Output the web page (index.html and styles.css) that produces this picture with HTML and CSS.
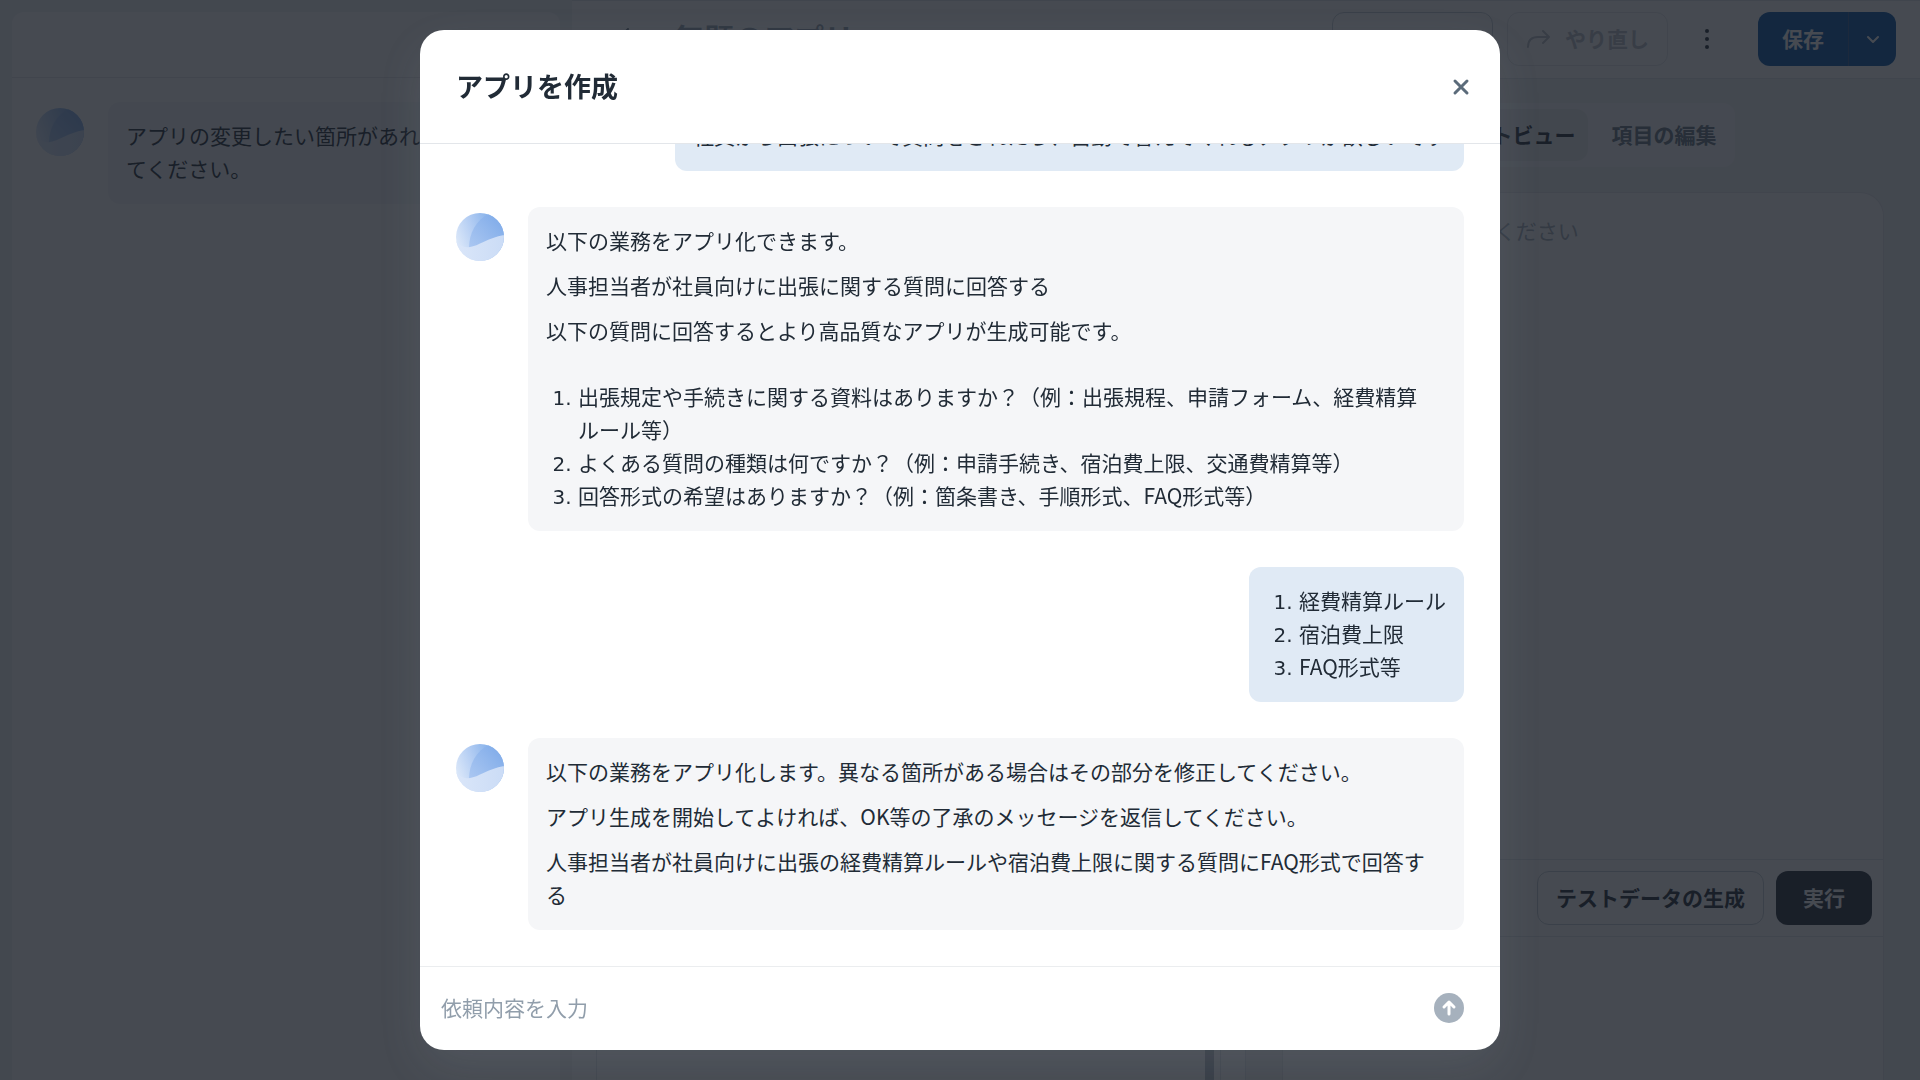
FILE: index.html
```html
<!DOCTYPE html>
<html lang="ja">
<head>
    <meta charset="UTF-8">
    <meta name="viewport" content="width=device-width, initial-scale=1.0">
    <title>アプリを作成</title>
    <link rel="stylesheet" href="styles.css">
</head>
<body>

    <!-- shared avatar artwork -->
    <svg class="defs" width="0" height="0" aria-hidden="true">
        <defs>
            <linearGradient id="av-sky" x1="0" y1="0.6" x2="0.8" y2="0.3">
                <stop offset="0" stop-color="#dce8f9"/>
                <stop offset="0.5" stop-color="#b3cdf3"/>
                <stop offset="1" stop-color="#86b1ea"/>
            </linearGradient>
            <linearGradient id="av-sail" x1="0.1" y1="1" x2="1" y2="0.2">
                <stop offset="0" stop-color="#a9c6f1"/>
                <stop offset="1" stop-color="#7fabe9"/>
            </linearGradient>
            <linearGradient id="av-sea" x1="0" y1="0" x2="1" y2="0">
                <stop offset="0" stop-color="#dae6f9"/>
                <stop offset="1" stop-color="#cbdcf6"/>
            </linearGradient>
            <clipPath id="av-clip"><circle cx="24" cy="24" r="24"/></clipPath>
            <symbol id="avatar" viewBox="0 0 48 48">
                <g clip-path="url(#av-clip)">
                    <rect width="48" height="48" fill="url(#av-sky)"/>
                    <path d="M13 35C13 20 20 7 34 0H48V26Z" fill="url(#av-sail)"/>
                    <path d="M0 28C4 33 8 35 14 34C22 33 32 25 48 22V48H0Z" fill="url(#av-sea)"/>
                </g>
            </symbol>
        </defs>
    </svg>

    <div class="app">
        <aside class="sidebar">
            <div class="sidebar-header"></div>
            <div class="message">
                <svg class="avatar" aria-hidden="true"><use href="#avatar"/></svg>
                <div class="bubble">
                    <p>アプリの変更したい箇所があれば指示してください。</p>
                </div>
            </div>
        </aside>

        <main class="workspace">
            <header class="topbar">
                <button class="icon-button back" aria-label="戻る">
                    <svg width="24" height="24" viewBox="0 0 24 24"><path d="M17 2L7 12L17 22"/></svg>
                </button>
                <h1>無題のアプリ</h1>
                <div class="actions">
                    <button class="outline">
                        <svg width="24" height="24" viewBox="0 0 24 24"><path d="M8 5L2 11L8 17M2 11H14C19 11 22 14 22 20"/></svg>
                        元に戻す
                    </button>
                    <button class="outline" disabled>
                        <svg width="24" height="24" viewBox="0 0 24 24"><path d="M17 5L23 11L17 17M23 11H12C6 11 2 14 2 21"/></svg>
                        やり直し
                    </button>
                </div>
                <button class="icon-button" aria-label="メニュー">
                    <svg width="24" height="24" viewBox="0 0 24 24" class="dots"><circle cx="12" cy="4" r="2"/><circle cx="12" cy="12" r="2"/><circle cx="12" cy="20" r="2"/></svg>
                </button>
                <div class="save-group">
                    <button class="save">保存</button>
                    <button class="save-more" aria-label="その他の保存方法">
                        <svg width="24" height="24" viewBox="0 0 24 24"><path d="M7 10L12 15L17 10"/></svg>
                    </button>
                </div>
            </header>

            <div class="columns">
                <section class="editor">
                    <div class="editor-panel"><div class="thumb"></div></div>
                </section>
                <section class="preview">
                    <div class="tabs">
                        <button class="tab active">テストビュー</button>
                        <button class="tab">項目の編集</button>
                    </div>
                    <div class="preview-panel">
                        <textarea class="preview-input" aria-label="質問内容" placeholder="質問内容を入力してください"></textarea>
                        <div class="preview-actions">
                            <button class="outline">テストデータの生成</button>
                            <button class="run">実行</button>
                        </div>
                        <div class="preview-result"></div>
                    </div>
                </section>
            </div>
        </main>
    </div>

    <div class="overlay">
        <div class="modal" role="dialog" aria-modal="true" aria-labelledby="modal-title">
            <header class="modal-header">
                <h2 id="modal-title">アプリを作成</h2>
                <button class="close" aria-label="閉じる">
                    <svg width="24" height="24" viewBox="0 0 24 24"><path d="M6 6L18 18M18 6L6 18"/></svg>
                </button>
            </header>

            <div class="messages">
                <div class="message user">
                    <div class="bubble">
                        <p>社員から出張について質問をされたら、自動で答えてくれるアプリが欲しいです</p>
                    </div>
                </div>

                <div class="message">
                    <svg class="avatar" aria-hidden="true"><use href="#avatar"/></svg>
                    <div class="bubble">
                        <p>以下の業務をアプリ化できます。</p>
                        <p>人事担当者が社員向けに出張に関する質問に回答する</p>
                        <p>以下の質問に回答するとより高品質なアプリが生成可能です。</p>
                        <ol>
                            <li>出張規定や手続きに関する資料はありますか？（例：出張規程、申請フォーム、経費精算ルール等）</li>
                            <li>よくある質問の種類は何ですか？（例：申請手続き、宿泊費上限、交通費精算等）</li>
                            <li>回答形式の希望はありますか？（例：箇条書き、手順形式、FAQ形式等）</li>
                        </ol>
                    </div>
                </div>

                <div class="message user">
                    <div class="bubble">
                        <ol>
                            <li>経費精算ルール</li>
                            <li>宿泊費上限</li>
                            <li>FAQ形式等</li>
                        </ol>
                    </div>
                </div>

                <div class="message">
                    <svg class="avatar" aria-hidden="true"><use href="#avatar"/></svg>
                    <div class="bubble">
                        <p>以下の業務をアプリ化します。異なる箇所がある場合はその部分を修正してください。</p>
                        <p>アプリ生成を開始してよければ、OK等の了承のメッセージを返信してください。</p>
                        <p>人事担当者が社員向けに出張の経費精算ルールや宿泊費上限に関する質問にFAQ形式で回答する</p>
                    </div>
                </div>
            </div>

            <form class="composer">
                <input type="text" aria-label="依頼内容" placeholder="依頼内容を入力">
                <button type="button" class="send" aria-label="送信">
                    <svg width="30" height="30" viewBox="0 0 30 30"><path d="M15 21V9M10 14L15 9L20 14"/></svg>
                </button>
            </form>
        </div>
    </div>

</body>
</html>
```

FILE: styles.css
```css
* {
    box-sizing: border-box;
}
body {
    margin: 0;
    background-color: #f1f2f5;
    color: #212b36;
    font-family: "Noto Sans CJK JP", sans-serif;
    font-size: 21px;
    line-height: 33px;
    line-break: strict;
    overflow: hidden;
}
h1, h2, p, ol {
    margin: 0;
}
button, input, textarea {
    font: inherit;
    color: inherit;
    border: none;
    background: none;
    padding: 0;
}
button {
    display: flex;
    align-items: center;
    justify-content: center;
    cursor: pointer;
    white-space: nowrap;
}
svg path {
    fill: none;
    stroke: currentColor;
    stroke-width: 2;
    stroke-linecap: round;
    stroke-linejoin: round;
}
.defs {
    position: absolute;
}
.defs path {
    stroke: none;
}
.defs path:nth-of-type(1) {
    fill: url(#av-sail);
}
.defs path:nth-of-type(2) {
    fill: url(#av-sea);
}

/* app behind the dialog */
.app {
    display: flex;
    gap: 12px;
    height: 100vh;
    padding-left: 12px;
}
.sidebar {
    flex: 0 0 548px;
    margin-top: 12px;
    background-color: #fff;
    border-radius: 12px 12px 0 0;
}
.sidebar-header {
    height: 66px;
    border-bottom: 1px solid #e3e6ea;
}
.sidebar .message {
    padding: 24px;
}
.sidebar .bubble {
    padding-right: 18px;
}
.workspace {
    flex: 1;
    display: flex;
    flex-direction: column;
    min-width: 0;
}
.topbar {
    display: flex;
    align-items: center;
    height: 79px;
    padding: 0 24px;
    background-color: #fff;
    border-bottom: 1px solid #dfe3e8;
    box-shadow: inset 0 1px #dfe3e8;
}
.topbar h1 {
    margin-left: 24px;
    padding-bottom: 4px;
    color: #919eab;
    font-size: 30px;
}
.back {
    color: #637381;
}
.actions {
    display: flex;
    gap: 14px;
    margin-left: auto;
}
.outline {
    gap: 15px;
    height: 54px;
    padding: 0 18px 2px;
    border: 1px solid #c4cdd5;
    border-radius: 12px;
    font-weight: 700;
}
.outline:disabled {
    border-color: #e3e6ea;
    color: #b8bec6;
}
.icon-button {
    width: 54px;
    height: 54px;
}
.actions + .icon-button {
    margin: 0 24px 0 12px;
}
.dots {
    fill: currentColor;
}
.save-group {
    display: flex;
    height: 54px;
    border-radius: 12px;
    background-color: #0052a4;
    color: #fff;
}
.save {
    padding: 0 24px 2px;
    font-weight: 700;
}
.save-more {
    width: 48px;
    border-left: 1px solid #2d5a94;
}
.columns {
    flex: 1;
    display: grid;
    grid-template-columns: 1fr 1fr;
    min-height: 0;
}
.editor {
    padding: 24px 24px 0;
    background-color: #fff;
    border-right: 1px solid #dfe3e8;
}
.editor-panel {
    display: flex;
    justify-content: flex-end;
    height: 100%;
    padding-right: 6px;
    border: 1px solid #dfe3e8;
    border-bottom: none;
}
.thumb {
    width: 9px;
    background-color: #b0bac4;
}
.preview {
    display: flex;
    flex-direction: column;
    align-items: center;
    gap: 25px;
    padding: 24px 36px 0;
}
.tabs {
    display: flex;
    gap: 12px;
    padding: 6px;
    border-radius: 12px;
    background-color: #fafbfc;
}
.tab {
    height: 52px;
    padding: 0 12px 2px;
    border-radius: 12px;
    color: #637381;
    font-weight: 700;
}
.tab.active {
    background-color: #eceef1;
    color: #212b36;
}
.preview-panel {
    flex: 1;
    align-self: stretch;
    display: flex;
    flex-direction: column;
    background-color: #fff;
    border: 1px solid #e3e6ea;
    border-bottom: none;
    border-radius: 24px 24px 0 0;
}
.preview-input {
    flex: 1;
    padding: 21px 24px;
    resize: none;
}
.preview-input::placeholder {
    color: #a5afba;
}
.preview-actions {
    display: flex;
    align-items: center;
    justify-content: flex-end;
    gap: 12px;
    height: 78px;
    padding: 0 11px;
    border-top: 1px solid #dfe3e8;
    border-bottom: 1px solid #dfe3e8;
}
.run {
    height: 54px;
    padding: 0 27px 2px;
    border-radius: 12px;
    background-color: #212b36;
    color: #fff;
    font-weight: 700;
}
.preview-result {
    height: 143px;
}

/* dialog */
.overlay {
    position: fixed;
    inset: 0;
    display: flex;
    justify-content: center;
    padding: 30px;
    background-color: rgba(24, 29, 38, 0.8);
}
.modal {
    display: flex;
    flex-direction: column;
    width: 100%;
    max-width: 1080px;
    background-color: #fff;
    border-radius: 24px;
    box-shadow: 0 18px 48px -6px rgba(145, 158, 171, 0.16);
    overflow: hidden;
}
.modal-header {
    display: flex;
    align-items: center;
    justify-content: space-between;
    height: 114px;
    flex-shrink: 0;
    padding: 0 27px 0 36px;
    border-bottom: 1px solid #e3e6ea;
}
.modal-header h2 {
    padding-bottom: 2px;
    font-size: 27px;
}
.close {
    color: #5b6b7a;
}
.close path {
    stroke-width: 3;
}
.messages {
    flex: 1;
    display: flex;
    flex-direction: column;
    justify-content: flex-end;
    gap: 36px;
    min-height: 0;
    padding: 36px;
    overflow: hidden;
}
.message {
    display: flex;
    gap: 24px;
}
.message.user {
    justify-content: flex-end;
}
.avatar {
    flex-shrink: 0;
    width: 48px;
    height: 48px;
    margin-top: 6px;
}
.bubble {
    flex: 1;
    padding: 17px 21px 19px 18px;
    border-radius: 12px;
    background-color: #f5f6f8;
}
.user .bubble {
    flex: none;
    padding-right: 18px;
    background-color: #e0eaf5;
}
.bubble p + p {
    margin-top: 12px;
}
.bubble ol {
    padding-left: 32px;
}
.bubble li::marker {
    font-family: "DejaVu Sans", sans-serif;
    font-size: 20px;
}
.bubble p + ol {
    margin-top: 33px;
}
.composer {
    display: flex;
    align-items: center;
    height: 84px;
    flex-shrink: 0;
    padding: 0 36px 2px 21px;
    border-top: 1px solid #ebedef;
}
.composer input {
    flex: 1;
    outline: none;
}
.composer input::placeholder {
    color: #919eab;
}
.send {
    width: 30px;
    height: 30px;
    border-radius: 50%;
    background-color: #a6b1bd;
    color: #fff;
}
.send path {
    stroke-width: 3;
}
```
